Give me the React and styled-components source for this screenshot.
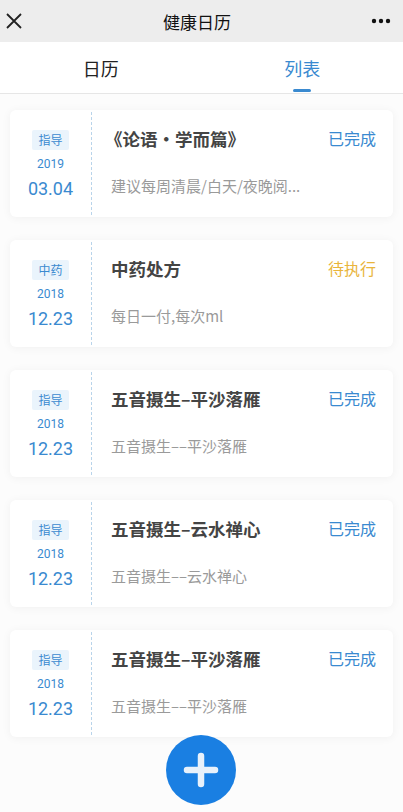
import React from "react";
import styled, { createGlobalStyle } from "styled-components";

const GlobalStyle = createGlobalStyle`
  body {
    margin: 0;
    background: #fcfcfc;
    font-family: "Noto Sans CJK SC", "Noto Sans", Roboto, sans-serif;
  }
`;

const Page = styled.div`
  width: 403px;
  min-height: 812px;
  position: relative;
`;

const Header = styled.div`
  height: 42px;
  background: #ededed;
  display: flex;
  align-items: center;
  justify-content: space-between;
  padding: 0 12px 0 5px;
  font-size: 17px;
  color: #111;
`;

const Tabs = styled.div`
  height: 51px;
  background: #fff;
  display: flex;
  border-bottom: 1px solid #e6e6e6;
`;

const Tab = styled.div`
  flex: 1;
  display: flex;
  flex-direction: column;
  align-items: center;
  justify-content: center;
  position: relative;
  font-size: 18px;
  color: ${p => (p.active ? "#3a8ad0" : "#222")};
  &::after {
    content: "";
    display: ${p => (p.active ? "block" : "none")};
    position: absolute;
    bottom: 1px;
    width: 18px;
    height: 3px;
    border-radius: 2px;
    background: #3a8ad0;
  }
`;

const List = styled.div`
  display: flex;
  flex-direction: column;
  gap: 23px;
  padding: 16px 10px 80px;
`;

const Card = styled.div`
  height: 107px;
  background: #fff;
  border-radius: 6px;
  box-shadow: 0 1px 10px rgba(0, 0, 0, 0.05);
  display: flex;
`;

const DateCol = styled.div`
  width: 82px;
  border-right: 1px dashed #b9d4ea;
  display: flex;
  flex-direction: column;
  align-items: center;
  padding-top: 18px;
  box-sizing: border-box;
  margin: 2px 0;
`;

const Tag = styled.div`
  background: #eaf4fc;
  color: #3a8ad0;
  font-size: 12px;
  line-height: 20px;
  padding: 0 6px;
  border-radius: 2px;
`;

const Year = styled.div`
  color: #3a8ad0;
  font-family: Roboto, "Noto Sans", sans-serif;
  font-size: 12px;
  margin-top: 6px;
  line-height: 17px;
`;

const Day = styled.div`
  color: #3a8ad0;
  font-family: Roboto, "Noto Sans", sans-serif;
  font-size: 18px;
  line-height: 24px;
  margin-top: 4px;
`;

const Body = styled.div`
  flex: 1;
  padding: 16px 17px 0 19px;
  display: flex;
  flex-direction: column;
`;

const TopRow = styled.div`
  display: flex;
  justify-content: space-between;
  align-items: center;
  height: 24px;
`;

const Title = styled.div`
  font-size: 17.5px;
  font-weight: 700;
  color: #444;
  margin-left: ${p => (p.book ? "-6px" : "0")};
`;

const Status = styled.div`
  font-size: 16px;
  color: ${p => (p.pending ? "#e9b53c" : "#3a8ad0")};
`;

const Desc = styled.div`
  margin-top: 25px;
  font-size: 15px;
  color: #9a9a9a;
  white-space: nowrap;
`;

const Fab = styled.button`
  position: fixed;
  left: 166px;
  bottom: 7px;
  width: 70px;
  height: 70px;
  border-radius: 50%;
  border: none;
  background: #1a7fe2;
  display: flex;
  align-items: center;
  justify-content: center;
  padding: 0;
`;

const items = [
  { tag: "指导", year: "2019", day: "03.04", title: "《论语·学而篇》", book: true, status: "已完成", desc: "建议每周清晨/白天/夜晚阅..." },
  { tag: "中药", year: "2018", day: "12.23", title: "中药处方", status: "待执行", pending: true, desc: "每日一付,每次ml" },
  { tag: "指导", year: "2018", day: "12.23", title: "五音摄生–平沙落雁", status: "已完成", desc: "五音摄生––平沙落雁" },
  { tag: "指导", year: "2018", day: "12.23", title: "五音摄生–云水禅心", status: "已完成", desc: "五音摄生––云水禅心" },
  { tag: "指导", year: "2018", day: "12.23", title: "五音摄生–平沙落雁", status: "已完成", desc: "五音摄生––平沙落雁" },
];

export default function App() {
  return (
    <Page>
      <GlobalStyle />
      <Header>
        <svg width="18" height="18" viewBox="0 0 18 18">
          <path d="M2 2 L16 16 M16 2 L2 16" stroke="#222" strokeWidth="1.8" />
        </svg>
        <span>健康日历</span>
        <svg width="20" height="6" viewBox="0 0 20 6">
          <circle cx="3" cy="3" r="2.2" fill="#111" />
          <circle cx="10" cy="3" r="2.2" fill="#111" />
          <circle cx="17" cy="3" r="2.2" fill="#111" />
        </svg>
      </Header>
      <Tabs>
        <Tab>日历</Tab>
        <Tab active>列表</Tab>
      </Tabs>
      <List>
        {items.map((it, i) => (
          <Card key={i}>
            <DateCol>
              <Tag>{it.tag}</Tag>
              <Year>{it.year}</Year>
              <Day>{it.day}</Day>
            </DateCol>
            <Body>
              <TopRow>
                <Title book={it.book}>{it.title}</Title>
                <Status pending={it.pending}>{it.status}</Status>
              </TopRow>
              <Desc>{it.desc}</Desc>
            </Body>
          </Card>
        ))}
      </List>
      <Fab>
        <svg width="36" height="36" viewBox="0 0 36 36">
          <path d="M18 4 V32 M4 18 H32" stroke="#e8f1fb" strokeWidth="6.5" strokeLinecap="round" />
        </svg>
      </Fab>
    </Page>
  );
}
